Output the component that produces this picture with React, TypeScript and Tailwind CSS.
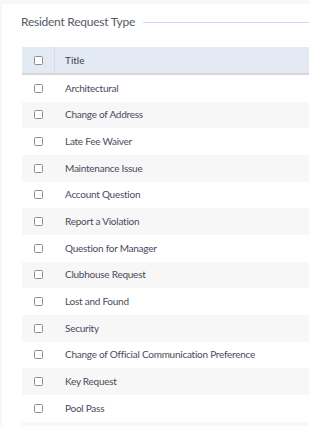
const items = [
  'Architectural',
  'Change of Address',
  'Late Fee Waiver',
  'Maintenance Issue',
  'Account Question',
  'Report a Violation',
  'Question for Manager',
  'Clubhouse Request',
  'Lost and Found',
  'Security',
  'Change of Official Communication Preference',
  'Key Request',
  'Pool Pass',
]

function Box() {
  return <span className="block w-[9px] h-[9px] rounded-[1.5px] border border-[#8f8f8f] bg-white" />
}

export default function App() {
  return (
    <div className="w-[309px] h-[426px] overflow-hidden bg-[#f7f7f7] pt-[4px] pl-[2px] font-['Lato',sans-serif]">
      <div className="bg-white h-full pl-[19px]">
        <div className="flex items-center h-[36px]">
          <h2 className="text-[12px] text-[#555a66] tracking-[-0.25px] whitespace-nowrap">Resident Request Type</h2>
          <div className="flex-1 h-px bg-[#c9dcf7] ml-[8px]" />
        </div>
        <div className="mt-[7px] ml-px">
          <div className="flex h-[28px] bg-[#e3eaf3] border-b-2 border-[#d6d6d6]">
            <div className="w-[33px] flex items-center justify-center border-r border-[#d2dbe6]">
              <Box />
            </div>
            <div className="flex items-center pl-[10px] text-[10px] text-[#3d3d4f]">Title</div>
          </div>
          {items.map((t, i) => (
            <div key={t} className={`flex h-[26.67px] ${i % 2 === 1 ? 'bg-[#f7f7f7]' : 'bg-white'}`}>
              <div className="w-[32px] flex items-center justify-center">
                <Box />
              </div>
              <div className="flex items-center pl-[11px] text-[10px] tracking-[-0.25px] text-[#4a4a5c] whitespace-nowrap">{t}</div>
            </div>
          ))}
          <div className="h-[26.67px] bg-[#f7f7f7]" />
        </div>
      </div>
    </div>
  )
}
